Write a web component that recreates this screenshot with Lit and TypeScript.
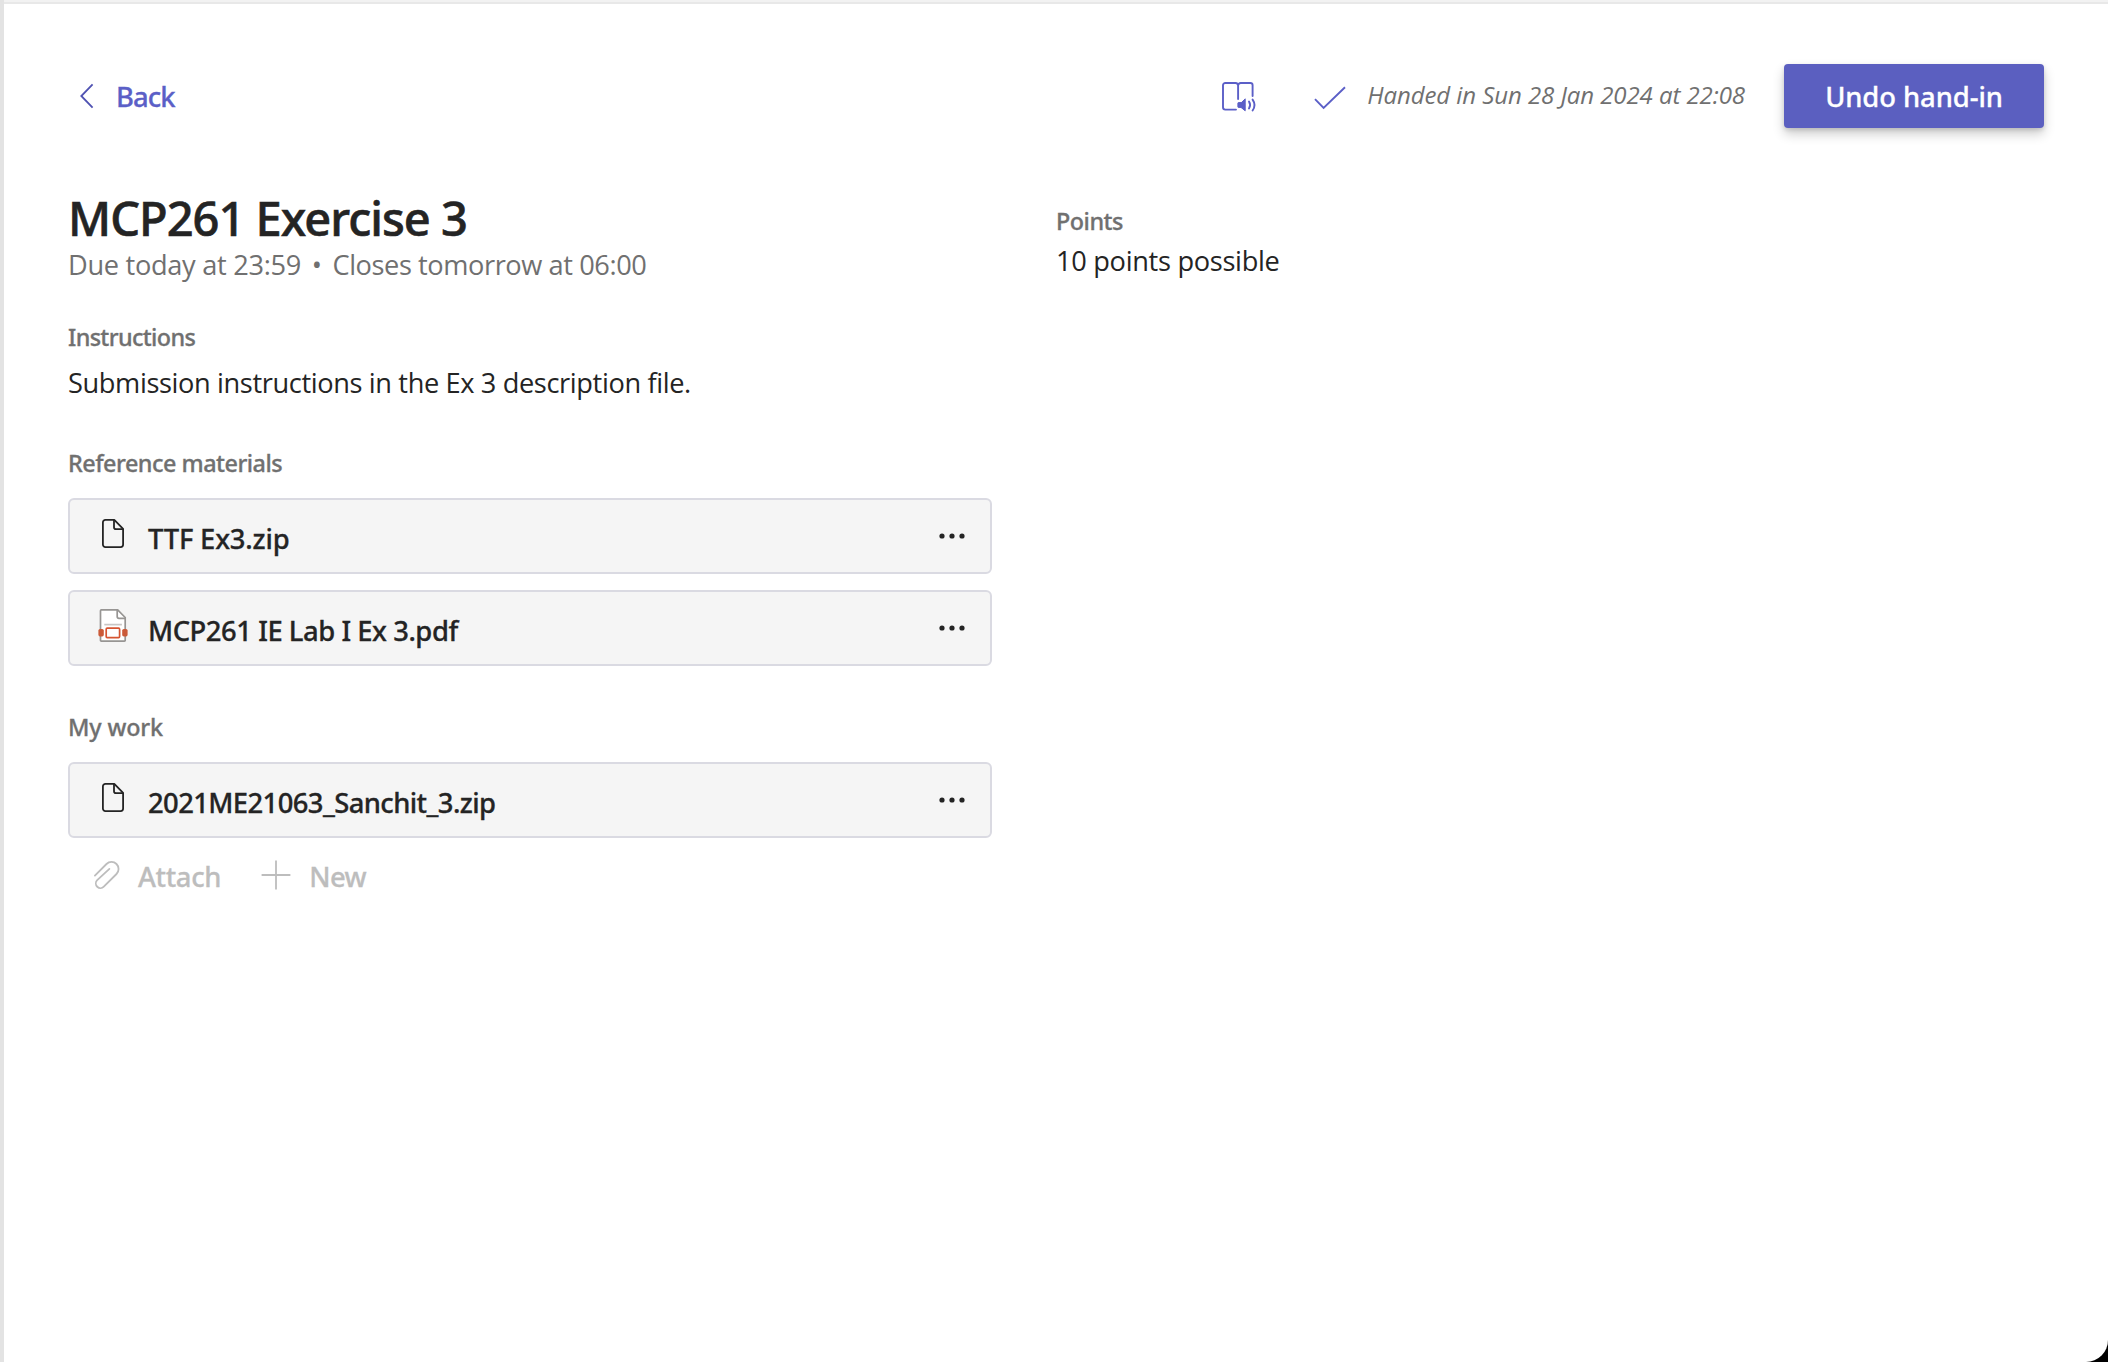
import { LitElement, html, css } from "lit";
import { customElement, property } from "lit/decorators.js";

const fileIcon = html`<svg width="22" height="29" viewBox="0 0 22 29" fill="none" stroke="#242424" stroke-width="1.8" stroke-linejoin="round">
  <path d="M3.4.9h8.9l8.8 8.9v15.8a2.5 2.5 0 0 1-2.5 2.5H3.4a2.5 2.5 0 0 1-2.5-2.5V3.4A2.5 2.5 0 0 1 3.4.9z"/>
  <path d="M12 1v7.2a1.9 1.9 0 0 0 1.9 1.9H21"/></svg>`;

const pdfIcon = html`<svg width="30" height="33" viewBox="0 0 30 33" fill="none">
  <path d="M3.3.9h16.4l7.5 7.6v22.8a.8.8 0 0 1-.8.8H3.3a.8.8 0 0 1-.8-.8V1.7a.8.8 0 0 1 .8-.8z" fill="#fff" stroke="#979593" stroke-width="1.7"/>
  <path d="M19.2 1v6.6a1.8 1.8 0 0 0 1.8 1.8h6" stroke="#979593" stroke-width="1.7"/>
  <path d="M6.3 15.6h17.6" stroke="#c8c6c4" stroke-width="1.7"/>
  <rect x=".4" y="20" width="5.4" height="7.4" rx="1.6" fill="#cb5a38"/>
  <rect x="24.2" y="20" width="5.4" height="7.4" rx="1.6" fill="#cb5a38"/>
  <rect x="8.2" y="19.2" width="13.4" height="9.4" rx="1" fill="#fff" stroke="#d65532" stroke-width="1.7"/></svg>`;

@customElement("file-card")
class FileCard extends LitElement {
  @property() name = "";
  @property() kind = "file";
  @property({ type: Number }) spacing = 0;

  static styles = css`
    :host { display: block; }
    .card {
      box-sizing: border-box; height: 76px; display: flex; align-items: center; padding: 0 25px 0 28px;
      border: 2px solid #dadae2; border-radius: 6px; background: #f5f5f5;
    }
    .icon { width: 30px; display: flex; justify-content: center; padding-bottom: 5px; }
    .name {
      flex: 1; padding: 5px 0 0 20px; font-size: 27.4px; line-height: 40px; font-weight: 500;
      color: #242424; white-space: nowrap; -webkit-text-stroke: 0.3px currentColor;
    }
    svg { display: block; }
  `;

  render() {
    return html`<div class="card">
      <div class="icon">${this.kind === "pdf" ? pdfIcon : fileIcon}</div>
      <div class="name" style="letter-spacing:${this.spacing}px">${this.name}</div>
      <svg width="26" height="6" viewBox="0 0 26 6" fill="#242424"><circle cx="3" cy="3" r="2.6"/><circle cx="13" cy="3" r="2.6"/><circle cx="23" cy="3" r="2.6"/></svg>
    </div>`;
  }
}

@customElement("app-root")
class AppRoot extends LitElement {
  static styles = css`
    :host { display: block; background: #000; font-family: "Noto Sans", sans-serif; color: #242424; }
    .page {
      box-sizing: border-box; width: 2108px; height: 1362px; padding: 64px 64px 0 68px;
      background: #fff; border-bottom-right-radius: 22px; white-space: nowrap; overflow: hidden;
      box-shadow: inset 4px 0 #e3e3e3, inset 0 2px #f2f2f2, inset 0 4px #e8e8e8;
    }
    svg { display: block; flex: none; }
    .semi { font-weight: 500; -webkit-text-stroke: 0.3px currentColor; }
    header { display: flex; align-items: center; height: 64px; color: #5b5fc7; }
    .back { display: flex; align-items: center; gap: 22px; padding-left: 12px; font-size: 27.4px; letter-spacing: -0.94px; }
    .status { margin-left: auto; display: flex; align-items: center; }
    .book { margin-top: 2px; }
    .check { margin: 3px 21px 0 56px; }
    .handed { font: italic 24px/32px "Open Sans", sans-serif; letter-spacing: -0.07px; color: #707070; padding-bottom: 2px; }
    .undo {
      box-sizing: border-box; width: 260px; height: 64px; margin: 0 0 0 39px; padding: 2px 0 0; border: 0;
      border-radius: 4px; background: #5b5fc0; color: #fff; font: 500 27.4px/40px "Noto Sans", sans-serif;
      letter-spacing: -0.07px; box-shadow: 0 6px 12px rgba(0, 0, 0, 0.2), 0 2px 4px rgba(0, 0, 0, 0.12);
    }
    main { display: grid; grid-template-columns: 924px 1fr; column-gap: 64px; padding-top: 63px; }
    .title { margin: 0; font-size: 47px; line-height: 54px; letter-spacing: -1px; -webkit-text-stroke-width: 0.6px; }
    .text { font: 27.2px/40px "Open Sans", sans-serif; letter-spacing: -0.37px; }
    .due { padding-top: 1px; line-height: 38px; color: #707070; letter-spacing: -0.3px; }
    .dot { margin: 0 4px; }
    .closes { letter-spacing: -0.42px; }
    .label { font-size: 23.4px; line-height: 32px; color: #707070; letter-spacing: -0.5px; }
    .instructions { margin-top: 37px; letter-spacing: -0.65px; }
    .group { margin-top: 44px; }
    .work { margin-top: 45px; letter-spacing: -0.15px; }
    .body { margin-top: 10px; }
    .files { margin-top: 19px; display: flex; flex-direction: column; gap: 16px; }
    .side { padding-top: 14px; }
    .points { margin-top: 4px; letter-spacing: -0.3px; }
    .actions {
      display: flex; align-items: center; height: 40px; margin-top: 18px; padding-left: 25px;
      color: #bdbdbd; font-size: 27.4px; line-height: 40px; letter-spacing: -0.35px;
    }
    .actions svg { margin-bottom: 2px; }
    .attach { margin: 2px 0 0 17px; }
    .plus { margin-left: 40px; }
    .new { margin: 2px 0 0 18px; letter-spacing: -0.5px; }
  `;

  render() {
    return html`<div class="page">
      <header>
        <div class="back semi">
          <svg width="14" height="26" viewBox="0 0 14 26" fill="none" stroke="#4f52b2" stroke-width="1.8"><path d="M12.6 1.4 1.3 13l11.3 11.6"/></svg>
          <span>Back</span>
        </div>
        <div class="status">
          <svg class="book" width="36" height="30" viewBox="0 0 36 30" fill="none" stroke="#5b5fc7" stroke-width="1.9" stroke-linecap="round">
            <path d="M14 27.6H3.3A2.3 2.3 0 0 1 1 25.3V3.3A2.3 2.3 0 0 1 3.3 1h10.2a2.6 2.6 0 0 1 2.6 2.6V17M16.1 3.6A2.6 2.6 0 0 1 18.7 1h9.6a2.3 2.3 0 0 1 2.3 2.3V14"/>
            <path d="M23.2 17.2v11.6l-4.2-3.4h-2.6a.5.5 0 0 1-.5-.5v-3.8a.5.5 0 0 1 .5-.5H19z" fill="#5b5fc7" stroke-width="1" stroke-linejoin="round"/>
            <path d="M27 19.6c1.3 2 1.3 4.8 0 6.8M30.6 17.6c2.3 3.3 2.3 7.6 0 10.9"/>
          </svg>
          <svg class="check" width="32" height="24" viewBox="0 0 32 24" fill="none" stroke="#5b5fc7" stroke-width="1.9"><path d="M1 13.2l8.6 8.8L31 1.2"/></svg>
          <span class="handed">Handed in Sun 28 Jan 2024 at 22:08</span>
          <button class="undo semi">Undo hand-in</button>
        </div>
      </header>
      <main>
        <section>
          <h1 class="title semi">MCP261 Exercise 3</h1>
          <div class="text due">Due today at 23:59 <span class="dot">•</span> <span class="closes">Closes tomorrow at 06:00</span></div>
          <div class="label semi instructions">Instructions</div>
          <div class="text body">Submission instructions in the Ex 3 description file.</div>
          <div class="label semi group">Reference materials</div>
          <div class="files">
            <file-card name="TTF Ex3.zip" spacing="-0.2"></file-card>
            <file-card name="MCP261 IE Lab I Ex 3.pdf" kind="pdf" spacing="-0.46"></file-card>
          </div>
          <div class="label semi work">My work</div>
          <div class="files">
            <file-card name="2021ME21063_Sanchit_3.zip" spacing="-0.59"></file-card>
          </div>
          <div class="actions semi">
            <svg width="28" height="30" viewBox="0 0 28 30" fill="none" stroke="#bdbdbd" stroke-width="1.8" stroke-linecap="round"><path d="M1.9 15.6 13.5 4a7 7 0 0 1 10 10L10.8 26.7a4.6 4.6 0 0 1-6.6-6.5L16.4 8.9"/></svg>
            <span class="attach">Attach</span>
            <svg class="plus" width="30" height="30" viewBox="0 0 30 30" stroke="#bdbdbd" stroke-width="1.8"><path d="M15 .6v28.8M.6 15h28.8"/></svg>
            <span class="new">New</span>
          </div>
        </section>
        <section class="side">
          <div class="label semi">Points</div>
          <div class="text points">10 points possible</div>
        </section>
      </main>
    </div>`;
  }
}
